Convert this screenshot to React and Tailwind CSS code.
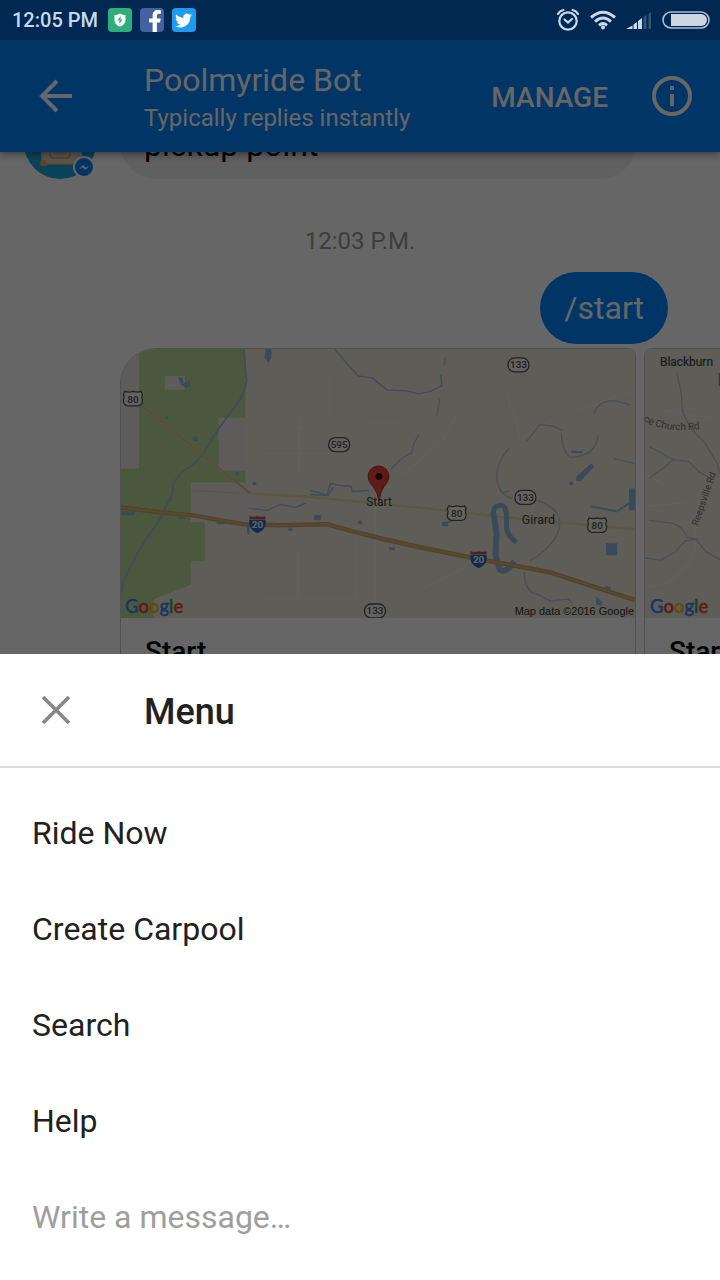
import { FaFacebookF, FaTwitter } from 'react-icons/fa'

const menuItems = ['Ride Now', 'Create Carpool', 'Search', 'Help']

function StatusBar() {
  return (
    <div className="h-10 shrink-0 bg-[#002850] flex items-center justify-between pl-3 pr-2.5 text-[#c6d9ec]">
      <div className="flex items-center gap-2">
        <span className="text-xl font-medium mr-0.5">12:05 PM</span>
        <span className="size-6 rounded bg-[#2fae79] flex items-center justify-center">
          <svg className="size-4" viewBox="0 0 16 16">
            <path d="M8 1.500Q10.500 3.200 13.500 3.200V8c0 3.500-2.500 5.600-5.500 6.600C5 13.600 2.500 11.500 2.500 8V3.200Q5.500 3.200 8 1.500Z" fill="#fff" />
            <path d="M8.800 4 5.500 8.400h2.100L7.200 12l3.300-4.600H8.400Z" fill="#2fae79" />
          </svg>
        </span>
        <span className="size-6 rounded bg-[#4460a0] flex items-end justify-end overflow-hidden pr-0.5">
          <FaFacebookF className="h-[22px] w-[14px] text-white" />
        </span>
        <span className="size-6 rounded bg-[#1d9bf0] flex items-center justify-center">
          <FaTwitter className="size-[17px] text-white" />
        </span>
      </div>
      <div className="flex items-center gap-2.5">
        <svg className="w-6 h-6" viewBox="0 0 24 24" fill="none" stroke="currentColor" strokeWidth="2.200" strokeLinecap="round">
          <circle cx="12" cy="13" r="8.700" />
          <path d="m8.500 11.500 3.500 3 4-3.500" />
          <path d="M2 6Q3.500 3 7.500 2M22 6Q20.500 3 16.500 2" />
        </svg>
        <svg className="w-[26px] h-5" viewBox="0 0 26 20" fill="none" stroke="currentColor" strokeWidth="3">
          <path d="M1 7.500Q13-3 25 7.500M5 11.600Q13 4.500 21 11.600M9 15.300Q13 12 17 15.300" />
          <circle cx="13" cy="17.500" r="2" fill="currentColor" stroke="none" />
        </svg>
        <svg className="w-[26px] h-5" viewBox="0 0 26 20" fill="currentColor">
          <path d="M0 19l6.500-3.500V19ZM7.500 14.500l3.500-2.500v7H7.500ZM12 11l4-3v11h-4Z" />
          <path d="m17.500 7 3-2v14h-3ZM22.500 4l2.500-2v17h-2.500Z" opacity=".25" />
        </svg>
        <svg className="w-12 h-[18px]" viewBox="0 0 48 18">
          <rect x="1" y="1" width="46" height="16" rx="8" fill="none" stroke="#a9bfd6" strokeWidth="1.600" />
          <path d="M9 3h30a6 6 0 0 1 0 12H9Z" fill="#ccd6e0" />
        </svg>
      </div>
    </div>
  )
}

function TopBar() {
  return (
    <header className="relative z-10 h-28 shrink-0 bg-[#0084ff] text-white flex items-center pl-8 pr-6 shadow-[0_2px_8px_rgba(0,0,0,0.45)]">
      <button aria-label="Back" className="size-12 flex items-center justify-center">
        <svg className="size-12" viewBox="0 0 48 48" fill="none" stroke="currentColor" strokeWidth="4">
          <path d="M40 24H11M25 9 10 24l15 15" />
        </svg>
      </button>
      <div className="ml-16 flex-1 min-w-0 pt-1">
        <h1 className="text-[32px] leading-10 truncate">Poolmyride Bot</h1>
        <p className="text-2xl leading-9 truncate">Typically replies instantly</p>
      </div>
      <button className="pt-1 text-[28px] font-medium">MANAGE</button>
      <button aria-label="Info" className="ml-10 size-12 flex items-center justify-center">
        <svg className="size-12" viewBox="0 0 48 48" fill="none" stroke="currentColor" strokeWidth="4">
          <circle cx="24" cy="24" r="18" />
          <path d="M24 22v12M24 14v4" />
        </svg>
      </button>
    </header>
  )
}

function Avatar() {
  return (
    <svg className="size-[72px] shrink-0" viewBox="0 0 72 72">
      <circle cx="36" cy="36" r="36" fill="#1aa9dc" />
      <path d="M18 30h40v27H24l-3 2h-4Z" fill="#e2d3bd" />
      <circle cx="19" cy="56" r="3" fill="#eda85a" />
      <path d="M22 57h30" stroke="#eda85a" strokeWidth="1.500" />
      <rect x="26" y="34" width="20" height="17" rx="3" fill="none" stroke="#c9a882" strokeWidth="1.500" />
      <path d="M29 46h14" stroke="#c9a882" />
      <circle cx="60" cy="60" r="11" fill="#fff" />
      <circle cx="60" cy="60" r="9" fill="#0084ff" />
      <path d="m54.500 63 4.500-5 2.800 2.800 4-2.800-4.500 5-2.800-2.800Z" fill="#fff" />
    </svg>
  )
}

function GoogleMark({ x, y }) {
  return (
    <text x={x} y={y} fontFamily="Lato, sans-serif" fontSize="18.500" fontWeight="500" strokeWidth="0.400">
      <tspan fill="#4285f4" stroke="#4285f4">G</tspan>
      <tspan fill="#ea4335" stroke="#ea4335">o</tspan>
      <tspan fill="#fbbc05" stroke="#fbbc05">o</tspan>
      <tspan fill="#4285f4" stroke="#4285f4">g</tspan>
      <tspan fill="#34a853" stroke="#34a853">l</tspan>
      <tspan fill="#ea4335" stroke="#ea4335">e</tspan>
    </text>
  )
}

function RouteOval({ x, y, label }) {
  return (
    <g transform={`translate(${x} ${y})`}>
      <rect x="-10.500" y="-7" width="21" height="14" rx="6.500" fill="#f4f4ee" stroke="#555" strokeWidth="1.300" />
      <text y="3.500" textAnchor="middle" fontSize="10" fontWeight="500" fill="#555">{label}</text>
    </g>
  )
}

function RouteShield({ x, y }) {
  return (
    <g transform={`translate(${x} ${y})`}>
      <path d="M-8-7.500q4 1.500 8 0 4 1.500 8 0l1.500 3q-1.500 3 0 6 0 5-4 5.500H-5.500q-4-.5-4-5.500 1.500-3 0-6Z" fill="#f4f4ee" stroke="#555" strokeWidth="1.300" />
      <text y="4" textAnchor="middle" fontSize="10" fontWeight="500" fill="#555">80</text>
    </g>
  )
}

function InterstateShield({ x, y }) {
  return (
    <g transform={`translate(${x} ${y})`}>
      <path d="M-8-8q4 1 8 0 4 1 8 0v3H-8Z" fill="#d0524a" />
      <path d="M-8-4.500H8Q10 5 0 9-10 5-8-4.500Z" fill="#2c6cc4" />
      <text y="4" textAnchor="middle" fontSize="10" fontWeight="700" fill="#fff">20</text>
    </g>
  )
}

function RideMap() {
  return (
    <svg className="block w-full" viewBox="0 0 516 270" fontFamily="Roboto, sans-serif" role="img" aria-label="Map of the start point">
      <rect width="516" height="270" fill="#eae9dd" />
      <path d="M0 0h18v120H0ZM98 69h27v53H98ZM70 134h55l20 12v28H84v39H70Z" fill="#e9e7e1" />
      <path d="M18 0H125V69H98V122H125V134H70V174H84V213H70V237L33 251V270H0V120H18Z" fill="#bfdc9b" />
      <path d="M44 27h20v14H44Z" fill="#e8e8de" />

      {/* Minor roads */}
      <g fill="none" stroke="#f1f0e7" strokeWidth="1.200">
        <path d="M210 20v50M150 80h60M179 65v60M140 105h75M300 119h60M250 74h30M300 47h80" />
        <path d="M388 40l3 20 6 12 3 20M400 92l27-18 40-15 49-18M275 131l23-17 26-24 14-26" />
        <path d="M178 200v50M235 190v60M140 250h100M305 240l40-20M440 224h76" />
        <path d="M255 153V270" strokeWidth="2" />
      </g>
      <path d="M70 142 123 145M0 259h30" stroke="#d9d7d2" fill="none" />

      {/* Streams */}
      <g fill="none" stroke="#a3bddd" strokeWidth="1.400" strokeLinejoin="round">
        <path d="M123 0q2 20 3 32-2 14-11 25L98 80 83 104 72 117l-10 5-9 12-3 18M53 142 40 169 18 202 3 232l-3 13" strokeWidth="2" />
        <path d="M214 0l17 19 7 8 14 2 15 12 20 1 12 3 10-2 9-4 4-2-1-11" />
        <path d="M190 146l17 1 3-12 11 2 10 1 1 5 17-1M128 160l19 2 13-6 15 3 10-4M190 142l18 5 5-8" />
      </g>
      <g fill="none" stroke="#b9c6d0" strokeWidth="1.400" strokeLinejoin="round">
        <path d="M324 16l2-8M320 50l-3 18M271 121l12-12 9-5 2-9 5-9" />
        <path d="M390 99q-16 18-12 36 4 12 14 15M407 93l13-17 12 1 12 5M442 84q1 20 10 25 25-2 27-22M475 65q4-14 22-13l14 4M495 110l21 5" />
        <path d="M390 142q-8 4-10 0M418 152q30 10 20 34-8 16-28 27M405 224q0 20 13 22l13 7 18-2 4 4" />
      </g>
      <path d="M472 158l26 5 12-8" fill="none" stroke="#9abadc" strokeWidth="2" />

      {/* Water */}
      <g fill="#94b8dd">
        <path d="M145 0h6v9l-3 5-4-5ZM57 28l5 1 1 6 6-4 1 6-5 2-5-3ZM457 128l15-13 3 3-14 15-4-1ZM510 140h6v22h-6ZM487 195h11v12h-11ZM477 248l6 6v3h-6ZM452 102l12 1-2 2-10-1Z" />
        <path d="M0 163h15l-2 4H0ZM322 174l14-2-8 3 1 3h-6ZM194 167h7v5h-7ZM269 199h6v3h-6ZM486 238l6 1-1 3-5-1ZM57 169h7v2h-7ZM96 174h8v2h-8ZM126 178h3v8h-2Z" />
        <circle cx="75" cy="90" r="2.500" />
        <circle cx="117" cy="125" r="2" />
        <circle cx="134" cy="135" r="2" />
        <circle cx="46" cy="69" r="1.500" />
        <circle cx="452" cy="135" r="2" />
        <circle cx="170" cy="181" r="2" />
        <circle cx="240" cy="174" r="2" />
      </g>

      {/* Roads */}
      <path d="M22 58 130 145l55 3 62 6 80 8 56 7 57 5 76 7" fill="none" stroke="#e6d7ae" strokeWidth="2.500" />
      <path d="M22 58 130 145" stroke="#dfc085" strokeWidth="2" />
      <path d="M374 167q-1-9 6-10 6-1 7 9l0 14q2 9 10 14" fill="none" stroke="#94b8dd" strokeWidth="5" />
      <path d="M374 165l3 20-1 22 4 14q5 6 15-8" fill="none" stroke="#94b8dd" strokeWidth="6" />
      <path d="M0 159 40 164 73 167 100 172 123 176 160 177 207 176 233 183 260 190 300 199 360 211 430 224 516 252" fill="none" stroke="#c9a264" strokeWidth="4.500" />
      <path d="M0 159 40 164 73 167 100 172 123 176 160 177 207 176 233 183 260 190 300 199 360 211 430 224 516 252" fill="none" stroke="#deb577" strokeWidth="2.500" />

      <RouteShield x={12} y={50} />
      <RouteShield x={337} y={165} />
      <RouteShield x={478} y={177} />
      <RouteOval x={219} y={96} label="595" />
      <RouteOval x={399} y={16} label="133" />
      <RouteOval x={406} y={149} label="133" />
      <RouteOval x={255} y={263} label="133" />
      <InterstateShield x={137} y={176} />
      <InterstateShield x={359} y={211} />

      <text x="259" y="158" textAnchor="middle" fontSize="12" fill="#444">Start</text>
      <text x="419" y="176" textAnchor="middle" fontSize="12.500" fill="#444">Girard</text>
      <path d="M259 153q-1-9-6-15-5-5-5-10a10.500 10.500 0 0 1 21 0q0 5-5 10-4 6-5 15Z" fill="#e8463e" stroke="#b33128" />
      <circle cx="259" cy="128" r="3.500" fill="#4a1010" />
      <GoogleMark x={4} y={265} />
      <text x="515" y="267" textAnchor="end" fontFamily="Liberation Sans, sans-serif" fontSize="11" fill="#333">Map data ©2016 Google</text>
    </svg>
  )
}

function NextMap() {
  return (
    <svg className="block w-full" viewBox="0 0 516 270" fontFamily="Roboto, sans-serif" role="img" aria-label="Map near Blackburn">
      <rect width="516" height="270" fill="#eae9dd" />
      <g fill="none" stroke="#f1f0e7" strokeWidth="1.500">
        <path d="M0 240l25-6 20-20q8-14 5-30l4-40M0 158l40-4M0 125l20 12M20 62l50 8" />
      </g>
      <g fill="none" stroke="#b9c6d0" strokeWidth="1.300">
        <path d="M32 24l4 18 2 22 8 16 14 14 12 20 4 12M4 98l12 6 12 7-10 9-14 10M28 111l16 2 10 10 14 8M4 172l24 3q10 3 14 14l9 2 10 12 20 12M0 210l16 2 14-8 10-11 14-3" />
      </g>
      <text x="15" y="17" fontSize="12" fill="#444" stroke="#444" strokeWidth="0.200">Blackburn</text>
      <path id="church-road" d="M-2 72Q20 85 56 80" fill="none" />
      <text fontSize="10" fill="#777"><textPath href="#church-road">ce Church Rd</textPath></text>
      <text transform="translate(53 178) rotate(-71)" fontSize="9.500" fill="#777">Reepsville Rd</text>
      <path d="M74 24h10v13H74Z" fill="#888" />
      <GoogleMark x={5} y={265} />
    </svg>
  )
}

function Card({ title, className, children }) {
  return (
    <article className={`w-[516px] shrink-0 overflow-hidden border border-[#c8c8c8] bg-white ${className}`}>
      {children}
      <h2 className="px-6 pt-4 text-[28px] leading-9 font-medium text-black">{title}</h2>
    </article>
  )
}

function Conversation() {
  return (
    <main className="flex-1 min-h-0 overflow-hidden bg-white">
      {/* Last message, partly scrolled under the top bar */}
      <div className="-mt-[45px] flex gap-6 pl-6 pr-[84px]">
        <Avatar />
        <p className="h-[72px] flex-1 rounded-[36px] bg-[#f0f0f0] px-6 pt-[18px] text-[32px] leading-10 text-black">pickup point</p>
      </div>
      <p className="mt-11 text-center text-2xl leading-9 text-[#9a9a9a]">12:03 P.M.</p>
      <div className="mt-[13px] flex justify-end pr-[52px]">
        <p className="rounded-[36px] bg-[#0084ff] px-6 py-4 text-[32px] leading-10 text-white">/start</p>
      </div>
      <div className="mt-1 pl-[120px] flex gap-2">
        <Card title="Start" className="rounded-tl-[36px] rounded-tr-lg">
          <RideMap />
        </Card>
        <Card title="Start" className="rounded-t-lg">
          <NextMap />
        </Card>
      </div>
    </main>
  )
}

function MenuSheet() {
  return (
    <section className="shrink-0 bg-white text-[#212121]">
      <div className="h-[114px] flex items-center gap-16 pl-8 border-b-2 border-[#dcdcdc]">
        <button aria-label="Close" className="size-12 flex items-center justify-center text-[#888]">
          <svg className="size-12" viewBox="0 0 48 48" fill="none" stroke="currentColor" strokeWidth="3.800">
            <path d="m11 11 26 26M37 11 11 37" />
          </svg>
        </button>
        <h2 className="pt-1 text-4xl font-medium">Menu</h2>
      </div>
      <div className="pt-[17px] pb-[15px] flex flex-col">
        {menuItems.map((item) => (
          <button key={item} className="h-24 px-8 text-left text-[32px]">
            {item}
          </button>
        ))}
        <input
          type="text"
          aria-label="Write a message"
          placeholder="Write a message…"
          className="h-24 px-8 text-[32px] outline-none placeholder:text-[#9e9e9e]"
        />
      </div>
    </section>
  )
}

export default function App() {
  return (
    <div className="h-dvh flex flex-col overflow-hidden font-['Roboto',sans-serif]">
      <StatusBar />
      <div className="relative flex-1 min-h-0 flex flex-col overflow-hidden">
        <TopBar />
        <Conversation />
        {/* Backdrop */}
        <div className="absolute inset-0 z-20 bg-black/60" />
      </div>
      <MenuSheet />
    </div>
  )
}
